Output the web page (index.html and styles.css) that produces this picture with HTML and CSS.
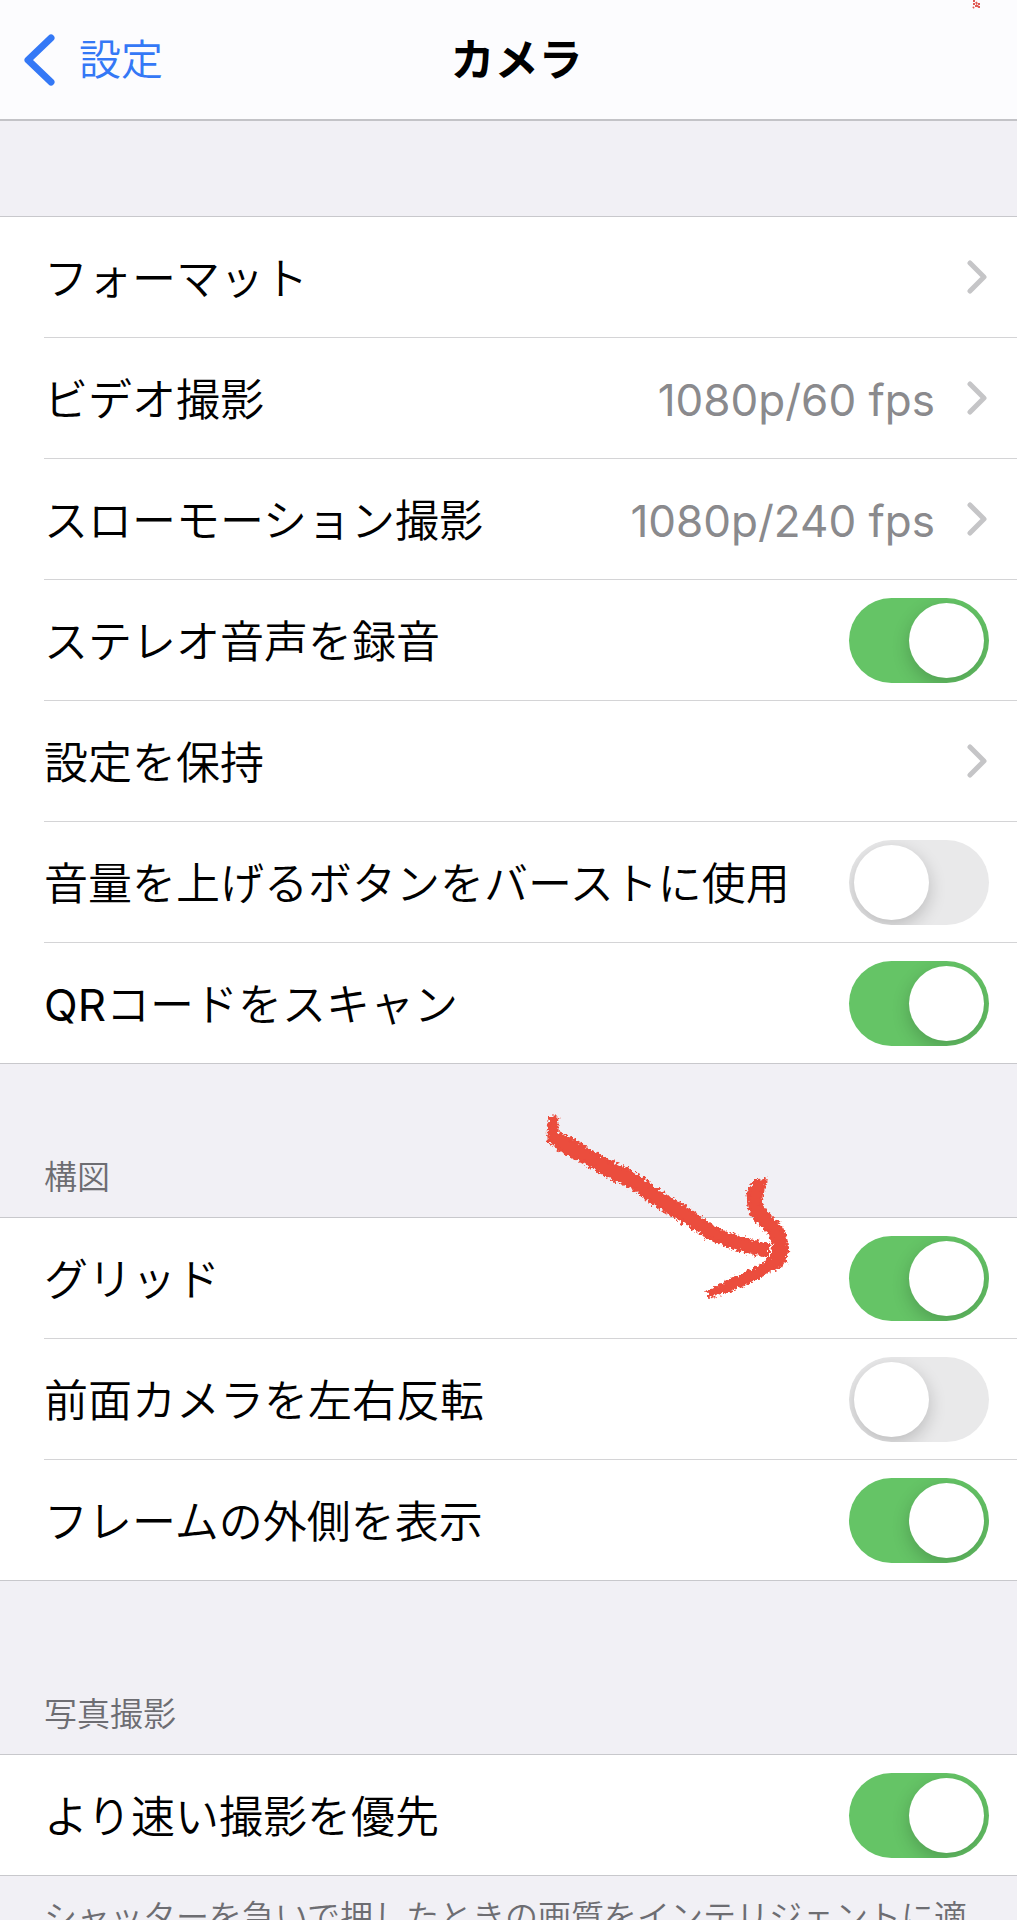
FILE: index.html
```html
<!DOCTYPE html>
<html lang="ja">
<head>
<meta charset="utf-8">
<meta name="viewport" content="width=device-width, initial-scale=1">
<title>カメラ</title>
<link rel="stylesheet" href="styles.css">
</head>
<body>
<svg class="defs" aria-hidden="true">
  <symbol id="chevron" viewBox="0 0 20 34"><path d="M3 3 L17 17 L3 31" fill="none" stroke="currentColor" stroke-width="5" stroke-linecap="round" stroke-linejoin="round"/></symbol>
</svg>
<div class="screen">
  <header class="navbar">
    <a class="back" href="#settings">
      <svg class="back-icon" viewBox="0 0 31 52" aria-hidden="true"><path d="M27 4 L4 26 L27 48" fill="none" stroke="currentColor" stroke-width="7" stroke-linecap="round" stroke-linejoin="round"/></svg>
      <span>設定</span>
    </a>
    <h1 class="title">カメラ</h1>
    <svg class="speck" viewBox="0 0 9 10" aria-hidden="true"><path d="M1 1h2M4 2l1 2M1 4h2M2 7l-1 1M4 5l3 2M6 4h2M3 6h2M6 7h2" fill="none" stroke="#e05a54" stroke-width="2"/></svg>
  </header>
  <main class="content">
    <section class="section">
      <div class="spacer"></div>
      <div class="group">
        <a class="row" href="#formats"><span class="label">フォーマット</span><svg class="chevron" aria-hidden="true"><use href="#chevron"/></svg></a>
        <a class="row" href="#video"><span class="label">ビデオ撮影</span><span class="value">1080p/60 fps</span><svg class="chevron" aria-hidden="true"><use href="#chevron"/></svg></a>
        <a class="row" href="#slow-motion"><span class="label">スローモーション撮影</span><span class="value">1080p/240 fps</span><svg class="chevron" aria-hidden="true"><use href="#chevron"/></svg></a>
        <label class="row"><span class="label">ステレオ音声を録音</span><input class="switch" type="checkbox" role="switch" checked></label>
        <a class="row" href="#preserve"><span class="label">設定を保持</span><svg class="chevron" aria-hidden="true"><use href="#chevron"/></svg></a>
        <label class="row"><span class="label">音量を上げるボタンをバーストに使用</span><input class="switch" type="checkbox" role="switch"></label>
        <label class="row"><span class="label"><span class="latin">QR</span>コードをスキャン</span><input class="switch" type="checkbox" role="switch" checked></label>
      </div>
    </section>
    <section class="section">
      <h2 class="section-title">構図</h2>
      <div class="group">
        <label class="row"><span class="label">グリッド</span><input class="switch" type="checkbox" role="switch" checked></label>
        <label class="row"><span class="label">前面カメラを左右反転</span><input class="switch" type="checkbox" role="switch"></label>
        <label class="row"><span class="label">フレームの外側を表示</span><input class="switch" type="checkbox" role="switch" checked></label>
      </div>
      <svg class="arrow" viewBox="0 0 900 690" aria-hidden="true">
        <defs>
          <filter id="crayon" filterUnits="userSpaceOnUse" x="0" y="0" width="900" height="690">
            <feTurbulence type="fractalNoise" baseFrequency="0.1" numOctaves="3" seed="4"/>
            <feDisplacementMap in="SourceGraphic" scale="26" xChannelSelector="R" yChannelSelector="G"/>
          </filter>
        </defs>
        <g fill="#eb4d3d" stroke="#eb4d3d" stroke-width="9" stroke-linejoin="round" filter="url(#crayon)">
          <path d="M94 84 L110 84 L112 130 L160 152 L225 190 L300 228 L372 268 L400 295 L450 325 L510 360 L560 398 L620 430 L680 450 L744 462 L742 498 L690 488 L620 468 L560 440 L500 402 L440 366 L380 328 L345 298 L270 262 L190 216 L125 182 L88 154 L84 118 Z"/>
          <path d="M706 272 L736 268 L728 304 L724 344 L750 378 L784 410 L798 450 L800 486 L790 520 L740 548 L690 576 L640 596 L572 618 L566 606 L620 576 L680 548 L730 522 L756 504 L762 454 L744 424 L712 396 L688 360 L684 310 Z"/>
        </g>
      </svg>
    </section>
    <section class="section">
      <h2 class="section-title section-title-tall">写真撮影</h2>
      <div class="group">
        <label class="row"><span class="label">より速い撮影を優先</span><input class="switch" type="checkbox" role="switch" checked></label>
      </div>
      <p class="note">シャッターを急いで押したときの画質をインテリジェントに適</p>
    </section>
  </main>
</div>
</body>
</html>
```
FILE: styles.css
```css
* {
  box-sizing: border-box;
}

body {
  margin: 0;
  background: #f1f0f5;
  color: #000;
  font-family: Inter, "Noto Sans CJK JP", sans-serif;
  font-size: 44px;
  font-weight: 350;
}

.defs {
  display: none;
}

.screen {
  display: flex;
  flex-direction: column;
  height: 100vh;
}

.navbar {
  position: relative;
  flex: none;
  display: grid;
  grid-template-columns: 1fr auto 1fr;
  align-items: center;
  height: 121px;
  padding: 0 8px 0 24px;
  background: #fcfcfe;
  border-bottom: 2px solid #c3c3c7;
}

.back {
  display: flex;
  align-items: center;
  gap: 24px;
  color: #3478f6;
  font-size: 42px;
  line-height: 60px;
  text-decoration: none;
}

.back-icon {
  width: 31px;
  height: 52px;
}

.title {
  margin: 0;
  font-size: 44px;
  font-weight: 700;
  line-height: 60px;
}

.speck {
  position: absolute;
  top: 0;
  right: 36px;
  width: 9px;
  height: 10px;
}

.content {
  flex: 1;
  min-height: 0;
  overflow-y: auto;
  scrollbar-width: none;
}

.section {
  position: relative;
}

.spacer {
  height: 95px;
}

.section-title {
  display: flex;
  align-items: flex-end;
  min-height: 153px;
  margin: 0;
  padding: 0 44px 20px;
  color: #6d6d72;
  font-size: 33px;
  font-weight: 350;
  line-height: 40px;
}

.section-title-tall {
  min-height: 173px;
}

.group {
  padding-left: 44px;
  background: #fff;
  border-top: 1px solid #c8c8cc;
  border-bottom: 1px solid #c8c8cc;
}

.row {
  display: flex;
  align-items: center;
  min-height: 121px;
  padding-right: 28px;
  border-bottom: 1px solid #d4d4d6;
  color: inherit;
  text-decoration: none;
}

.row:last-child {
  min-height: 120px;
  border-bottom: 0;
}

.label,
.value {
  padding-top: 3px;
  line-height: 60px;
}

.label {
  flex: 1;
}

.latin {
  font-weight: 400;
}

.value {
  color: #8a8a8d;
  font-weight: 400;
}

.chevron {
  width: 20px;
  height: 34px;
  margin: 0 2px 0 32px;
  color: #c5c5c7;
}

.switch {
  appearance: none;
  flex: none;
  width: 140px;
  height: 85px;
  margin: 0;
  padding: 5px;
  overflow: hidden;
  background: #e9e9ea;
  border-radius: 43px;
}

.switch::before {
  content: "";
  display: block;
  width: 75px;
  height: 75px;
  background: #fff;
  border-radius: 50%;
  box-shadow: 0 6px 18px rgba(0, 0, 0, 0.2);
}

.switch:checked {
  background: #65c466;
}

.switch:checked::before {
  margin-left: auto;
}

.arrow {
  position: absolute;
  top: 26px;
  right: 197px;
  width: 300px;
  height: 230px;
  pointer-events: none;
}

.note {
  margin: 0;
  padding: 19px 28px 40px 44px;
  color: #6d6d72;
  font-size: 33px;
  line-height: 44px;
}
```
